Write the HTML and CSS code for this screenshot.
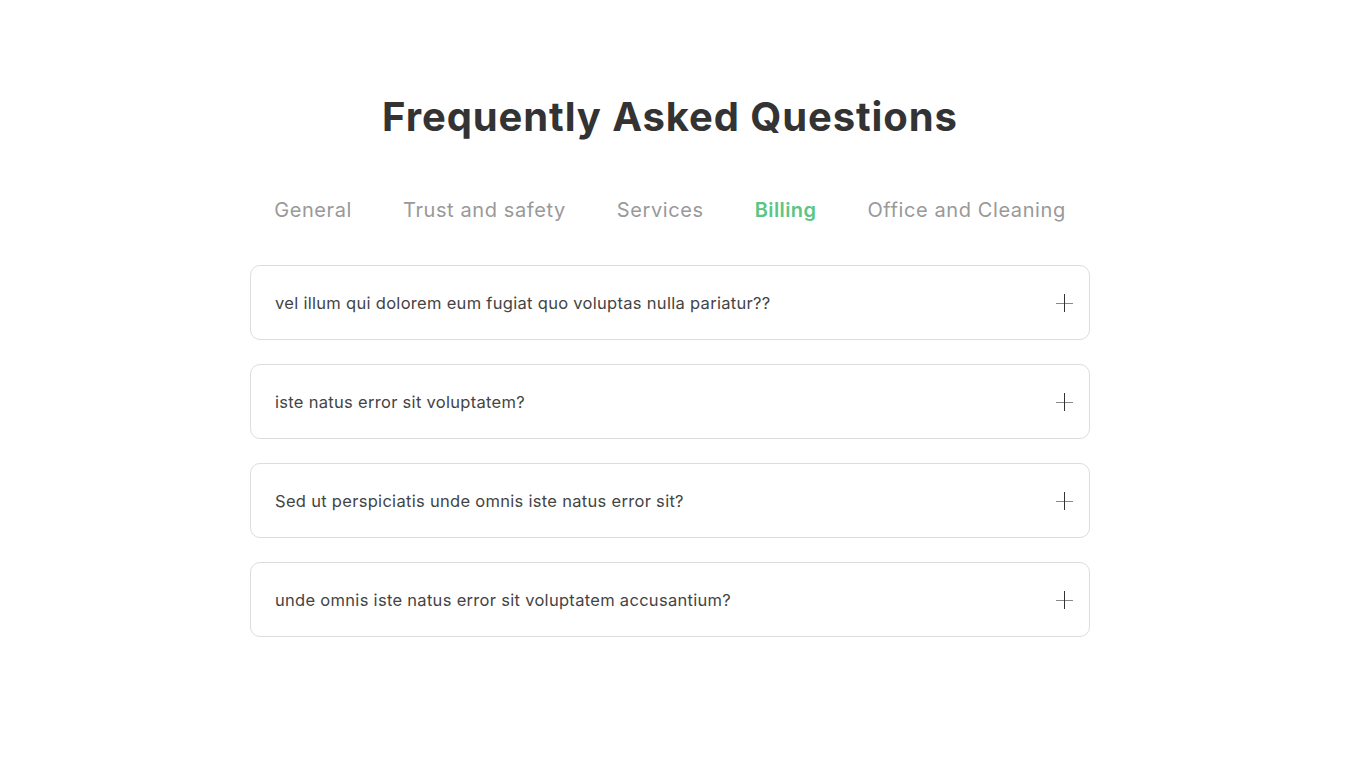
FILE: index.html
```html
<!DOCTYPE html>
<html lang="en">
<head>
<meta charset="utf-8">
<title>FAQ</title>
<link rel="stylesheet" href="styles.css">
</head>
<body>
<main class="faq">
  <h1 class="faq-title">Frequently Asked Questions</h1>
  <nav class="tabs">
    <span class="tab">General</span>
    <span class="tab">Trust and safety</span>
    <span class="tab">Services</span>
    <span class="tab active">Billing</span>
    <span class="tab">Office and Cleaning</span>
  </nav>
  <div class="list">
    <div class="item"><span class="q">vel illum qui dolorem eum fugiat quo voluptas nulla pariatur??</span><span class="plus"></span></div>
    <div class="item"><span class="q">iste natus error sit voluptatem?</span><span class="plus"></span></div>
    <div class="item"><span class="q">Sed ut perspiciatis unde omnis iste natus error sit?</span><span class="plus"></span></div>
    <div class="item"><span class="q">unde omnis iste natus error sit voluptatem accusantium?</span><span class="plus"></span></div>
  </div>
</main>
</body>
</html>
```

FILE: styles.css
```css
* { box-sizing: border-box; }
html, body { margin: 0; padding: 0; background: #fff; }
body {
  font-family: Inter, "Noto Sans", sans-serif;
  color: #333;
  padding-right: 31px;
}
.faq {
  width: 840px;
  margin: 0 auto;
  padding-top: 90px;
  display: flex;
  flex-direction: column;
  align-items: center;
}
.faq-title {
  margin: 0;
  font-size: 40px;
  line-height: 54px;
  font-weight: 700;
  letter-spacing: 0.9px;
  color: #333;
}
.tabs {
  display: flex;
  gap: 51px;
  margin-top: 51px;
  font-size: 20px;
  line-height: 30px;
  letter-spacing: 0.6px;
}
.tab { color: #999; }
.tab.active { color: #5cc584; font-weight: 600; letter-spacing: 0.4px; }
.list {
  width: 100%;
  margin-top: 40px;
  display: flex;
  flex-direction: column;
  gap: 24px;
}
.item {
  height: 75px;
  border: 1px solid #ddd;
  border-radius: 10px;
  padding: 0 16px 0 24px;
  display: flex;
  align-items: center;
  justify-content: space-between;
}
.q { font-size: 16.5px; letter-spacing: 0.3px; color: #444; }
.plus {
  position: relative;
  width: 17px;
  height: 18px;
}
.plus::before, .plus::after {
  content: "";
  position: absolute;
  background: #333;
}
.plus::before { left: 0; right: 0; top: 9px; height: 1px; background: #888; }
.plus::after { top: 0; bottom: 0; left: 8px; width: 1px; }
```
